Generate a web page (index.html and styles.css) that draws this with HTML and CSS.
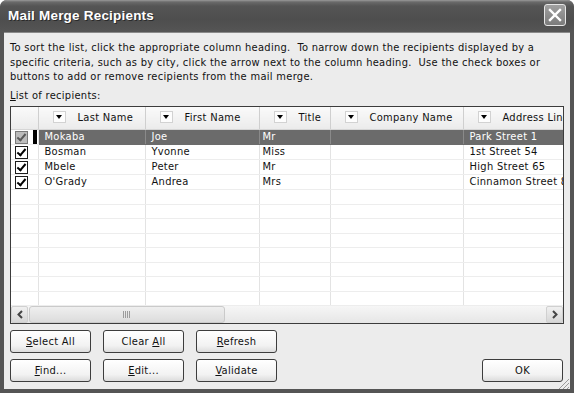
FILE: index.html
```html
<!DOCTYPE html>
<html lang="en">
<head>
  <meta charset="UTF-8">
  <title>Mail Merge Recipients</title>
  <link rel="stylesheet" href="styles.css">
</head>
<body>
  <div class="window">
    <div class="titlebar">
      <span class="title">Mail Merge Recipients</span>
      <span class="close">
        <svg width="14" height="14" viewBox="0 0 14 14"><path d="M2 2 L12 12 M12 2 L2 12" stroke="#fff" stroke-width="2.4" stroke-linecap="square"/></svg>
      </span>
    </div>

    <div class="client">
      <p class="intro">To sort the list, click the appropriate column heading.&nbsp; To narrow down the recipients displayed by a specific criteria, such as by city, click the arrow next to the column heading.&nbsp; Use the check boxes or buttons to add or remove recipients from the mail merge.</p>
      <div class="label"><u>L</u>ist of recipients:</div>

      <div class="listbox">
        <div class="grid-wrap">
          <table class="grid">
            <colgroup>
              <col class="c-check">
              <col class="c-last">
              <col class="c-first">
              <col class="c-title">
              <col class="c-company">
              <col class="c-address">
            </colgroup>
            <thead>
              <tr>
                <th></th>
                <th><span class="dd"></span>Last Name</th>
                <th><span class="dd"></span>First Name</th>
                <th><span class="dd"></span>Title</th>
                <th><span class="dd"></span>Company Name</th>
                <th><span class="dd"></span>Address Line 1</th>
              </tr>
            </thead>
            <tbody>
              <tr class="selected">
                <td class="chk"><span class="box on dim"></span><span class="marker"></span></td>
                <td>Mokaba</td><td>Joe</td><td class="t">Mr</td><td></td><td>Park Street 1</td>
              </tr>
              <tr>
                <td class="chk"><span class="box on"></span></td>
                <td>Bosman</td><td>Yvonne</td><td class="t">Miss</td><td></td><td>1st Street 54</td>
              </tr>
              <tr>
                <td class="chk"><span class="box on"></span></td>
                <td>Mbele</td><td>Peter</td><td class="t">Mr</td><td></td><td>High Street 65</td>
              </tr>
              <tr>
                <td class="chk"><span class="box on"></span></td>
                <td>O'Grady</td><td>Andrea</td><td class="t">Mrs</td><td></td><td>Cinnamon Street 8</td>
              </tr>
              <tr class="empty"><td></td><td></td><td></td><td></td><td></td><td></td></tr>
              <tr class="empty"><td></td><td></td><td></td><td></td><td></td><td></td></tr>
              <tr class="empty"><td></td><td></td><td></td><td></td><td></td><td></td></tr>
              <tr class="empty"><td></td><td></td><td></td><td></td><td></td><td></td></tr>
              <tr class="empty"><td></td><td></td><td></td><td></td><td></td><td></td></tr>
              <tr class="empty"><td></td><td></td><td></td><td></td><td></td><td></td></tr>
              <tr class="empty"><td></td><td></td><td></td><td></td><td></td><td></td></tr>
              <tr class="empty"><td></td><td></td><td></td><td></td><td></td><td></td></tr>
            </tbody>
          </table>
        </div>
        <div class="hscroll">
          <span class="sb-btn">
            <svg width="8" height="9" viewBox="0 0 8 9"><path d="M6 1 L2.5 4.5 L6 8" fill="none" stroke="#444" stroke-width="2"/></svg>
          </span>
          <div class="sb-track">
            <span class="sb-thumb"><span class="grip"></span></span>
          </div>
          <span class="sb-btn">
            <svg width="8" height="9" viewBox="0 0 8 9"><path d="M2 1 L5.5 4.5 L2 8" fill="none" stroke="#444" stroke-width="2"/></svg>
          </span>
        </div>
      </div>

      <div class="actions">
        <div class="btn-grid">
          <button class="btn"><u>S</u>elect All</button>
          <button class="btn">Clear <u>A</u>ll</button>
          <button class="btn"><u>R</u>efresh</button>
          <button class="btn"><u>F</u>ind...</button>
          <button class="btn"><u>E</u>dit...</button>
          <button class="btn"><u>V</u>alidate</button>
        </div>
        <button class="btn">OK</button>
      </div>
    </div>

    <svg class="grip-corner" width="12" height="12" viewBox="0 0 12 12">
      <path d="M11 1 L1 11 M11 5 L5 11 M11 9 L9 11" stroke="#9a9a9a" stroke-width="1"/>
    </svg>
  </div>
</body>
</html>
```

FILE: styles.css
```css
* {
  box-sizing: border-box;
}
body {
  margin: 0;
  background: #fff;
  font-family: "DejaVu Sans Condensed", "Liberation Sans", sans-serif;
  font-size: 11px;
  letter-spacing: 0.3px;
  color: #111;
}
.window {
  position: relative;
  width: 574px;
  height: 393px;
  display: flex;
  flex-direction: column;
  background: #555;
  border-radius: 7px 7px 0 0;
  overflow: hidden;
}
.titlebar {
  height: 32px;
  flex: none;
  display: flex;
  align-items: center;
  justify-content: space-between;
  padding: 0 8px 2px 8px;
  background: linear-gradient(#9a9a9a 0, #6a6a6a 2px, #555 6px, #4e4e4e 20px, #555 100%);
}
.title {
  font-family: "Liberation Sans", sans-serif;
  font-weight: bold;
  font-size: 13.5px;
  letter-spacing: 0.2px;
  color: #fff;
  text-shadow: 1px 1px 0 #2a2a2a;
}
.close {
  width: 22px;
  height: 22px;
  display: flex;
  align-items: center;
  justify-content: center;
  border: 1px solid #e6e6e6;
  border-radius: 3px;
  background: linear-gradient(#a0a0a0, #7b7b7b);
}
.client {
  flex: 1;
  margin: 0 4px 4px;
  padding: 8px 6px 0;
  background: #ececec;
  border-top: 1px solid #8a8a8a;
}
.intro {
  margin: 0;
  line-height: 14.5px;
}
.label {
  margin-top: 4px;
  line-height: 14px;
}
.listbox {
  margin-top: 3px;
  width: 554px;
  border: 1px solid #3c3c3c;
  background: #fff;
}
.grid-wrap {
  height: 199px;
  overflow: hidden;
}
.grid {
  table-layout: fixed;
  border-collapse: collapse;
  width: 560px;
}
.c-check { width: 27px; }
.c-last { width: 107px; }
.c-first { width: 114px; }
.c-title { width: 71px; }
.c-company { width: 133px; }
.c-address { width: 108px; }
.grid th {
  height: 23px;
  padding: 0 0 0 14px;
  text-align: left;
  font-weight: normal;
  white-space: nowrap;
  overflow: hidden;
  background: linear-gradient(#fafafa, #ebebeb);
  border-right: 1px solid #cfcfcf;
  border-bottom: 1px solid #d6d6d6;
}
.dd {
  display: inline-block;
  vertical-align: -2px;
  width: 13px;
  height: 12px;
  margin-right: 12px;
  background: #fdfdfd;
  border: 1px solid #d2d2d2;
  position: relative;
}
.dd::after {
  content: "";
  position: absolute;
  left: 2px;
  top: 3px;
  border-left: 3.5px solid transparent;
  border-right: 3.5px solid transparent;
  border-top: 4px solid #000;
}
.grid td {
  height: 14.5px;
  padding: 0 0 0 6px;
  white-space: nowrap;
  overflow: hidden;
  line-height: 14px;
  border-right: 1px solid #e3e3e3;
  border-bottom: 1px solid #ededed;
}
.grid td.t {
  padding-left: 3px;
}
.grid td.chk {
  padding: 0 0 0 4px;
  position: relative;
}
.selected td {
  background: #6b6b6b;
  color: #fff;
  border-right-color: #8a8a8a;
  border-bottom-color: #6b6b6b;
}
.selected td.chk {
  background: #fff;
  border-right-color: #e3e3e3;
  border-bottom-color: #ededed;
}
.box {
  display: block;
  width: 13px;
  height: 13px;
  border: 1px solid #1c1c1c;
  background: #fff;
  position: relative;
}
.box.on::after {
  content: "";
  position: absolute;
  left: 3px;
  top: 0px;
  width: 3px;
  height: 7px;
  border-right: 2px solid #000;
  border-bottom: 2px solid #000;
  transform: rotate(40deg);
}
.box.dim {
  background: #bcbcbc;
  border-color: #7a7a7a;
}
.box.dim::after {
  border-color: #5a5a5a;
}
.marker {
  position: absolute;
  right: 1px;
  top: 0;
  width: 4px;
  height: 100%;
  background: #000;
}
.hscroll {
  height: 17px;
  display: flex;
  background: linear-gradient(#f6f6f6, #e6e6e6);
}
.sb-btn {
  width: 17px;
  flex: none;
  display: flex;
  align-items: center;
  justify-content: center;
  border: 1px solid #d0d0d0;
  border-radius: 2px;
  background: linear-gradient(#f0f0f0, #d6d6d6);
}
.sb-track {
  flex: 1;
  padding: 0 1px;
}
.sb-thumb {
  display: flex;
  align-items: center;
  justify-content: center;
  width: 196px;
  height: 17px;
  border: 1px solid #cacaca;
  border-radius: 3px;
  background: linear-gradient(#efefef, #dcdcdc);
}
.grip {
  width: 8px;
  height: 7px;
  background: repeating-linear-gradient(90deg, #9c9c9c 0 1px, transparent 1px 2px);
}
.actions {
  margin-top: 6px;
  display: flex;
  justify-content: space-between;
  align-items: flex-end;
  width: 553px;
}
.btn-grid {
  display: grid;
  grid-template-columns: repeat(3, 81px);
  column-gap: 12px;
  row-gap: 6px;
}
.btn {
  width: 81px;
  height: 23px;
  padding: 0;
  font: inherit;
  letter-spacing: inherit;
  color: #111;
  border: 1px solid #3d3d3d;
  border-radius: 3px;
  background: linear-gradient(#ffffff, #f2f2f2 70%, #dcdcdc);
}
.grip-corner {
  position: absolute;
  right: 4px;
  bottom: 3px;
}
```
